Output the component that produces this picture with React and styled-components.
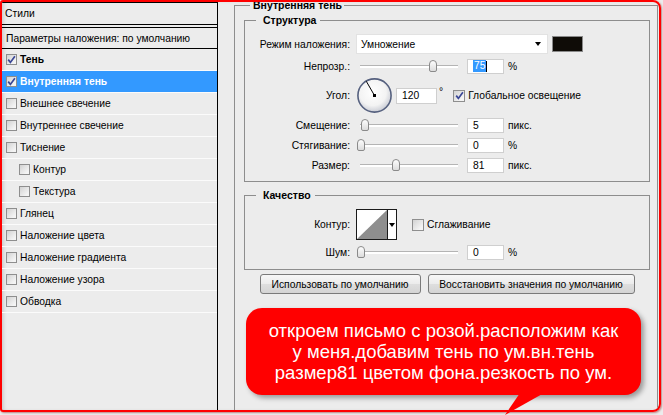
import React from "react";
import styled, { createGlobalStyle } from "styled-components";

const GlobalStyle = createGlobalStyle`
  html, body {
    margin: 0;
    padding: 0;
    background: #ececec;
  }
  body {
    font-family: "Liberation Sans", Arial, sans-serif;
    font-size: 10.3px;
    color: #000;
  }
`;

const Screen = styled.div`
  position: relative;
  width: 663px;
  height: 415px;
  overflow: hidden;
  background: #ececec;
`;

const Frame = styled.div`
  box-sizing: border-box;
  width: 661px;
  height: 412px;
  border: 2px solid #ff0000;
  border-radius: 3px 8px 8px 3px;
  box-shadow: 1px 1px 2px rgba(130, 0, 0, 0.45),
    inset 3px 0 4px -2px rgba(0, 0, 0, 0.18);
  display: flex;
  overflow: hidden;
`;

/* ---------- left: styles list ---------- */

const StylesPanel = styled.div`
  box-sizing: border-box;
  width: 216px;
  flex-shrink: 0;
  border-top: 1px solid #000;
  border-right: 1px solid #000;
  display: flex;
  flex-direction: column;
`;

const PanelTitle = styled.div`
  height: 21px;
  padding-left: 3px;
  display: flex;
  align-items: center;
  border-bottom: 4px double #000;
`;

const BlendDefaults = styled.div`
  height: 20px;
  padding-left: 4px;
  display: flex;
  align-items: center;
  border-bottom: 1px solid #000;
`;

const StyleRow = styled.div`
  height: 21px;
  display: flex;
  align-items: center;
  gap: 3px;
  padding-left: ${({ $indent }) => ($indent ? 17 : 4)}px;
  border-bottom: 1px solid #fbfbfb;
  background: ${({ $selected }) => ($selected ? "#3399ff" : "transparent")};
  color: ${({ $selected }) => ($selected ? "#fff" : "#000")};
  font-weight: ${({ $bold }) => ($bold ? "bold" : "normal")};
`;

const Box = styled.span`
  box-sizing: border-box;
  width: ${({ $size }) => $size || 11}px;
  height: ${({ $size }) => $size || 11}px;
  flex-shrink: 0;
  border: 1px solid #8e8e8e;
  background: linear-gradient(135deg, #d2d2d2, #f4f4f4 80%);
  display: flex;
  align-items: center;
  justify-content: center;
`;

function Check({ checked, size }) {
  return (
    <Box $size={size}>
      {checked && (
        <svg width="9" height="9" viewBox="0 0 9 9">
          <path
            d="M1.2 4.6 L3.4 7.4 L7.9 1.2"
            fill="none"
            stroke="#3a4796"
            strokeWidth="1.7"
          />
        </svg>
      )}
    </Box>
  );
}

/* ---------- right: effect settings ---------- */

const EffectArea = styled.div`
  flex: 1;
  display: flex;
  flex-direction: column;
  padding: 0 1px 0 16px;
`;

const Group = styled.fieldset`
  margin: 0;
  min-width: 0;
  border: 1px solid #8d8d8d;
`;

const OuterGroup = styled(Group)`
  flex: 1;
  margin-top: -3px;
  padding: 3px 7px 0 9px;
  border-bottom: none;
`;

const InnerGroup = styled(Group)`
  margin-top: ${({ $top }) => $top || 0}px;
  padding: 8px 0 ${({ $bottom }) => $bottom || 8}px 0;
`;

const GroupTitle = styled.legend`
  font-weight: bold;
  font-size: 10.5px;
  line-height: 12px;
  margin-left: ${({ $outer }) => ($outer ? 6 : 11)}px;
  padding: ${({ $outer }) => ($outer ? "0 2px 0 3px" : "0 4px 0 7px")};
`;

const FieldGrid = styled.div`
  display: grid;
  grid-template-columns: 105px 1fr;
  column-gap: 6px;
  row-gap: 4px;
  align-items: center;
`;

const FieldLabel = styled.div`
  text-align: right;
  white-space: nowrap;
`;

const Controls = styled.div`
  display: flex;
  align-items: center;
  height: ${({ $h }) => $h || 16}px;
`;

const Select = styled.div`
  box-sizing: border-box;
  width: 192px;
  height: 20px;
  background: #fff;
  border: 1px solid #e2e2e2;
  display: flex;
  align-items: center;
  justify-content: space-between;
  padding: 0 6px 0 4px;
`;

const DownArrow = styled.span`
  width: 0;
  height: 0;
  border-top: 4px solid #000;
  border-left: 3px solid transparent;
  border-right: 3px solid transparent;
`;

const Swatch = styled.div`
  box-sizing: border-box;
  width: 31px;
  height: 16px;
  margin-left: 4px;
  border: 1px solid #8a8a8a;
  background: #0f0c07;
`;

const Slider = styled.div`
  position: relative;
  width: 104px;
  height: 16px;
  display: flex;
  align-items: center;
`;

const Track = styled.div`
  box-sizing: border-box;
  flex: 1;
  margin: 0 2px 0 4px;
  height: 3px;
  border-top: 1px solid #b4b4b4;
  background: #fff;
`;

const Thumb = styled.div`
  position: absolute;
  top: 2px;
  box-sizing: border-box;
  width: 8px;
  height: 12px;
  border: 1px solid #8a8a8a;
  border-radius: 4px 4px 2px 2px;
  background: linear-gradient(#fdfdfd, #dcdcdc);
`;

const NumInput = styled.div`
  box-sizing: border-box;
  width: ${({ $w }) => $w || 37}px;
  height: ${({ $h }) => $h || 15}px;
  margin-left: ${({ $gap }) => ($gap === undefined ? 7 : $gap)}px;
  padding-left: 5px;
  background: #fff;
  border: 1px solid #cfcfcf;
  display: flex;
  align-items: center;
`;

const Highlight = styled.span`
  background: #3399ff;
  color: #fff;
  padding: 0 1px;
  line-height: 12px;
`;

const Caret = styled.span`
  width: 1px;
  height: 11px;
  background: #000;
`;

const Unit = styled.span`
  margin-left: 4px;
`;

const Degree = styled.span`
  margin-left: 2px;
  align-self: flex-start;
  margin-top: 8px;
`;

const CheckLabel = styled.label`
  display: flex;
  align-items: center;
  gap: 3px;
  margin-left: ${({ $gap }) => $gap}px;
`;

const ContourBox = styled.div`
  box-sizing: border-box;
  width: 41px;
  height: 31px;
  border: 1px solid #1a1a1a;
  display: flex;
  background: #fff;
`;

const ContourArrow = styled.div`
  width: 8px;
  border-left: 1px solid #1a1a1a;
  display: flex;
  align-items: center;
  justify-content: center;
`;

const ButtonRow = styled.div`
  margin-top: 4px;
  display: flex;
  justify-content: center;
  gap: 7px;
`;

const Button = styled.button`
  box-sizing: border-box;
  width: ${({ $w }) => $w}px;
  height: 20px;
  padding: 0;
  font: inherit;
  color: #000;
  border: 1px solid #7a7a7a;
  border-radius: 3px;
  background: linear-gradient(#f7f7f7, #ececec 48%, #dedede 52%, #d4d4d4);
`;

/* ---------- note over the screenshot ---------- */

const Callout = styled.div`
  position: absolute;
  left: 246px;
  top: 308px;
  width: 395px;
  height: 87px;
  border-radius: 16px;
  background: #ff0000;
  box-shadow: 3px 3px 5px rgba(0, 0, 0, 0.35);
  color: #fff;
  font-size: 18.5px;
  line-height: 21px;
  text-align: center;
  display: flex;
  align-items: center;
  justify-content: center;
`;

const Pointer = styled.svg`
  position: absolute;
  left: 500px;
  top: 393px;
`;

const styleItems = [
  { name: "Тень", checked: true, bold: true },
  { name: "Внутренняя тень", checked: true, bold: true, selected: true },
  { name: "Внешнее свечение" },
  { name: "Внутреннее свечение" },
  { name: "Тиснение" },
  { name: "Контур", indent: true },
  { name: "Текстура", indent: true },
  { name: "Глянец" },
  { name: "Наложение цвета" },
  { name: "Наложение градиента" },
  { name: "Наложение узора" },
  { name: "Обводка" },
];

function SliderField({ thumb, value, unit, selected }) {
  return (
    <Controls>
      <Slider>
        <Track />
        <Thumb style={{ left: thumb }} />
      </Slider>
      <NumInput>
        {selected ? (
          <>
            <Highlight>{value}</Highlight>
            <Caret />
          </>
        ) : (
          value
        )}
      </NumInput>
      <Unit>{unit}</Unit>
    </Controls>
  );
}

function Dial() {
  return (
    <svg width="35" height="35" viewBox="0 0 35 35" style={{ marginLeft: 1 }}>
      <defs>
        <radialGradient id="dialFill" cx="45%" cy="40%" r="62%">
          <stop offset="0" stopColor="#ffffff" />
          <stop offset="0.65" stopColor="#f3f3f3" />
          <stop offset="1" stopColor="#c6c9d2" />
        </radialGradient>
      </defs>
      <circle
        cx="17.5"
        cy="17.5"
        r="16.6"
        fill="url(#dialFill)"
        stroke="#56617f"
        strokeWidth="1.6"
      />
      <line x1="17.5" y1="17.5" x2="9.3" y2="3.3" stroke="#000" strokeWidth="1" />
      <rect x="16" y="16" width="3" height="3" fill="#000" />
    </svg>
  );
}

export default function App() {
  return (
    <Screen>
      <GlobalStyle />
      <Frame>
        <StylesPanel>
          <PanelTitle>Стили</PanelTitle>
          <BlendDefaults>Параметры наложения: по умолчанию</BlendDefaults>
          {styleItems.map((item) => (
            <StyleRow
              key={item.name}
              $indent={item.indent}
              $selected={item.selected}
              $bold={item.bold}
            >
              <Check checked={item.checked} />
              {item.name}
            </StyleRow>
          ))}
        </StylesPanel>

        <EffectArea>
          <OuterGroup>
            <GroupTitle $outer>Внутренняя тень</GroupTitle>

            <InnerGroup>
              <GroupTitle>Структура</GroupTitle>
              <FieldGrid>
                <FieldLabel>Режим наложения:</FieldLabel>
                <Controls $h={20}>
                  <Select>
                    Умножение
                    <DownArrow />
                  </Select>
                  <Swatch />
                </Controls>

                <FieldLabel>Непрозр.:</FieldLabel>
                <SliderField thumb={73} value="75" unit="%" selected />

                <FieldLabel>Угол:</FieldLabel>
                <Controls $h={35}>
                  <Dial />
                  <NumInput $w={41} $h={16} $gap={4}>
                    120
                  </NumInput>
                  <Degree>°</Degree>
                  <CheckLabel $gap={10}>
                    <Check checked size={12} />
                    Глобальное освещение
                  </CheckLabel>
                </Controls>

                <FieldLabel>Смещение:</FieldLabel>
                <SliderField thumb={5} value="5" unit="пикс." />

                <FieldLabel>Стягивание:</FieldLabel>
                <SliderField thumb={1} value="0" unit="%" />

                <FieldLabel>Размер:</FieldLabel>
                <SliderField thumb={36} value="81" unit="пикс." />
              </FieldGrid>
            </InnerGroup>

            <InnerGroup $top={7} $bottom={9}>
              <GroupTitle>Качество</GroupTitle>
              <FieldGrid>
                <FieldLabel>Контур:</FieldLabel>
                <Controls $h={31}>
                  <ContourBox>
                    <svg width="30" height="29" viewBox="0 0 30 29">
                      <polygon points="0,29 30,0 30,29" fill="#8e8e8e" />
                    </svg>
                    <ContourArrow>
                      <DownArrow />
                    </ContourArrow>
                  </ContourBox>
                  <CheckLabel $gap={15}>
                    <Check size={12} />
                    Сглаживание
                  </CheckLabel>
                </Controls>

                <FieldLabel>Шум:</FieldLabel>
                <SliderField thumb={1} value="0" unit="%" />
              </FieldGrid>
            </InnerGroup>

            <ButtonRow>
              <Button $w={161}>Использовать по умолчанию</Button>
              <Button $w={207}>Восстановить значения по умолчанию</Button>
            </ButtonRow>
          </OuterGroup>
        </EffectArea>
      </Frame>

      <Callout>
        откроем письмо с розой.расположим как
        <br />
        у меня.добавим тень по ум.вн.тень
        <br />
        размер81 цветом фона.резкость по ум.
      </Callout>
      <Pointer width="46" height="22" viewBox="0 0 46 22">
        <polygon points="20,0 44,0 5,22" fill="#ff0000" />
      </Pointer>
    </Screen>
  );
}
